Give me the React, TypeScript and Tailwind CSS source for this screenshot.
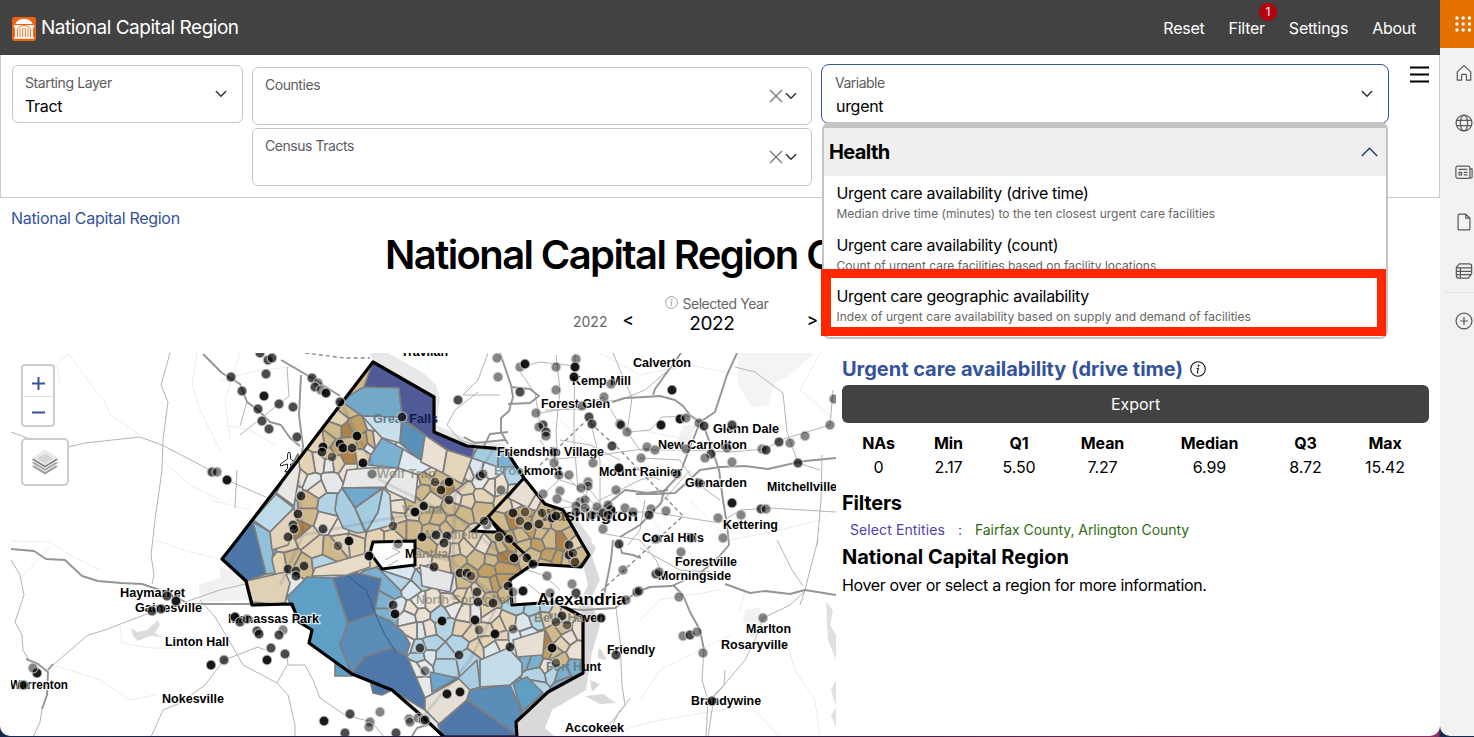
import React from 'react';

type Pt = [number, number];

const COUNTY: Pt[] = [
  [373, 362], [434, 397], [434, 432], [467, 446], [505, 449], [524, 478], [545, 504], [563, 510], [583, 545],
  [589, 555], [581, 567], [533, 564], [510, 580], [512, 605], [555, 602], [583, 617], [583, 673], [548, 692],
  [516, 722], [517, 737], [444, 737], [423, 717], [392, 690], [352, 674], [309, 643], [312, 630], [299, 622],
  [292, 604], [252, 605], [246, 581], [222, 559], [237, 540],
];

const CODES: Record<string, string> = {
  a: '#e3d2b4', b: '#cfb88a', c: '#bf9f63', d: '#ebe0d2', e: '#e7e9e9', f: '#dbe7ef', g: '#b3d4e5', h: '#7bb0d0', i: '#ae8149',
};

const SEEDS = `
350,412,b 340,418,a 322,430,b 334,432,b 345,428,i 356,428,c 364,420,a 371,440,b 362,444,c 352,448,b 344,440,c 338,447,c
326,443,b 318,440,a 314,450,a 330,455,b 320,460,d 347,457,i 357,458,b 366,458,a 338,462,a 328,466,e 315,472,e 305,463,a
300,478,d 292,490,e 281,480,e 328,481,e 319,490,d 308,500,b 300,508,d 312,485,e 326,503,g 290,503,g 293,520,a 301,526,i
280,535,a 287,548,a 296,546,d 308,535,a 306,518,b 322,520,d 334,525,a 318,548,a 330,545,b 340,538,a 350,548,b 358,540,a
342,530,d 355,536,a 310,556,b 300,565,b 290,560,b 322,562,g 335,557,f 280,560,a 270,552,h 296,586,e 303,583,f
375,421,f 375,440,d 370,448,e 380,425,e 373,470,e 360,475,e 392,478,e 404,468,e 350,470,d 385,470,e 410,480,e 418,472,b
410,458,f 430,468,d 437,476,b 444,482,b 450,490,i 438,488,c 458,485,b 452,475,a 465,470,d 466,490,a 475,466,f 485,470,e
480,480,e 492,475,e 500,485,d 505,478,f 490,488,d 480,495,a 468,502,a 495,498,a 505,500,a 480,508,b 465,515,b 510,470,g 517,478,g
425,480,b 421,490,b 412,492,d 400,493,d 400,505,d 410,505,b 420,503,b 415,517,a 400,517,a 430,500,a 440,505,a 450,505,b
458,500,d 436,515,b 450,518,b 425,515,b 405,530,b 393,537,a 380,533,b 375,540,a 385,520,a 413,528,b 422,530,c 433,528,b
445,530,b 458,526,b 468,527,b 455,537,a 436,538,a 425,543,b 465,540,b 475,540,a 484,542,d 492,550,b 480,550,b 468,550,a
455,548,a 445,550,a 430,555,a 440,562,a 422,560,d 425,572,d 440,578,e 450,585,e 460,565,b 468,572,c 478,570,b 488,572,c
498,565,c 505,558,i 512,552,b 500,545,b 490,560,b 480,562,b 508,570,i 502,580,c 494,585,c 484,583,b 475,585,c 463,585,b
490,597,b 505,592,b 500,600,a 480,597,a 470,595,a 460,595,a 514,572,d 506,540,c 498,535,b
500,520,b 508,508,b 515,500,d 520,492,d 528,500,d 505,528,c 513,520,i 520,512,c 525,520,c 533,512,b 540,520,b 548,512,b
556,516,b 550,528,c 540,532,b 530,533,c 520,535,b 515,543,a 527,545,b 537,542,c 547,540,b 557,530,b 565,525,b 570,535,b
562,542,i 552,550,f 545,555,c 535,555,b 557,558,c 568,552,b 578,555,b 577,545,a 567,562,b 528,560,i 572,562,i 543,562,b
422,580,g 412,580,f 405,570,f 400,582,g 395,595,h 385,585,g 388,600,h 396,608,f 384,614,h 405,598,f 412,590,f 420,600,e
410,610,d 400,618,f 412,620,e 422,613,d 430,605,d 440,595,e 448,600,d 455,608,e 440,612,g 430,618,f 420,630,f 430,632,d
445,625,g 455,618,d 465,615,d 460,628,a 470,635,a 450,638,a 475,610,e 485,612,a 492,618,d 480,622,a 488,630,a 498,628,a
505,620,a 510,612,e 490,642,a 475,645,a 500,638,a 485,650,e 495,650,f 470,655,g 460,645,g 450,650,g 440,655,g 432,645,g
420,645,g 410,650,g 418,658,g 425,667,e 430,655,f 440,668,g 415,670,e 415,685,e 445,662,g 466,668,h 405,640,e 410,630,d
518,608,g 525,612,g 535,608,g 545,610,g 520,622,f 530,625,g 540,620,g 515,635,f 525,635,f 535,628,f 548,620,a 556,612,a
563,618,a 572,615,d 578,628,d 565,630,b 555,632,b 550,640,b 560,642,a 570,640,d 578,650,d 565,652,b 552,655,b 548,650,c
560,662,b 572,662,h 562,672,h 550,672,g 540,678,g 530,668,f 535,660,h 525,660,h 545,665,d 552,685,g 537,688,g 565,680,h
512,655,f 498,658,f 505,645,d 545,640,i 575,670,h 547,600,a
`.trim().split(/\s+/).filter((_, i) => i % 4 !== 2).map((s, i) => {
  const [x, y, c] = s.split(',');
  return { x: Number(x) + ((i * 37) % 7) - 3, y: Number(y) + ((i * 53) % 7) - 3, c };
});

/* Cell of one seed: the map rectangle cut by the bisector against every near seed. */
function cellOf(i: number): Pt[] {
  const s = SEEDS[i];
  let poly: Pt[] = [[215, 355], [595, 355], [595, 740], [215, 740]];
  SEEDS.forEach((o, j) => {
    if (j === i) return;
    const mx = (s.x + o.x) / 2;
    const my = (s.y + o.y) / 2;
    const nx = o.x - s.x;
    const ny = o.y - s.y;
    const side = (p: Pt) => (p[0] - mx) * nx + (p[1] - my) * ny;
    const next: Pt[] = [];
    poly.forEach((p, k) => {
      const q = poly[(k + 1) % poly.length];
      const a = side(p);
      const b = side(q);
      if (a <= 0) next.push(p);
      if (a * b < 0) {
        const t = a / (a - b);
        next.push([p[0] + (q[0] - p[0]) * t, p[1] + (q[1] - p[1]) * t]);
      }
    });
    poly = next;
  });
  return poly;
}
const CELLS = SEEDS.map((s, i) => ({ c: CODES[s.c], pts: cellOf(i).map((p) => p.map((v) => v.toFixed(1)).join(',')).join(' ') }));

const TRACTS: [string, string][] = [
  ['#4f5a96', '373,362 434,397 434,432 467,446 474,448 472,458 447,450 425,435 402,418 398,389 364,387'],
  ['#72a9c9', '364,387 399,388 402,418 362,416 345,404 338,402'],
  ['#c9dfeb', '362,416 402,417 400,443 382,438'],
  ['#5991b9', '402,420 425,435 421,461 400,443'],
  ['#7bb1d0', '382,438 403,449 398,468 368,465 371,455'],
  ['#e0ebf1', '403,449 421,460 432,467 418,475 398,468'],
  ['#e8e9e7', '398,468 418,475 415,503 402,497 387,490 385,485'],
  ['#e9eae8', '347,470 368,468 398,468 385,487 342,488'],
  ['#e8e7e4', '298,454 300,470 294,506 276,493'],
  ['#bfdae8', '276,494 294,508 270,532 253,520'],
  ['#4d76a8', '253,520 266,574 246,581 222,559 237,540'],
  ['#90c0da', '253,522 270,532 274,545 272,560 275,573 266,574'],
  ['#e3d3b8', '294,508 297,522 288,545 272,550 270,532'],
  ['#5f9fc5', '307,577 333,578 348,623 340,645 352,674 352,676 335,676 335,661 309,643 312,630 299,622 287,597'],
  ['#4d76a8', '333,578 357,573 381,579 374,614 348,623'],
  ['#5a8db8', '348,623 374,614 390,621 403,632 410,644 406,656 392,648 364,657 352,674 340,645'],
  ['#4f77aa', '392,648 407,656 425,698 425,710 392,690 382,695 373,693 370,680 352,674 364,657'],
  ['#e6dfd5', '425,698 460,678 470,690 467,700 440,725 425,710'],
  ['#4f77aa', '467,700 517,735 517,740 444,740 438,725'],
  ['#5a8db8', '470,690 510,685 522,712 516,722 517,735 467,700'],
  ['#5f9fc5', '513,683 527,677 543,693 522,712'],
  ['#c5dcea', '480,687 480,660 508,648 522,663 522,675 510,685'],
  ['#a8cde0', '458,678 477,660 480,687 470,690'],
  ['#e0d0b5', '246,581 285,572 290,583 285,603 272,604 252,602'],
  ['#70a9cc', '342,488 383,488 355,508'],
  ['#a9cee1', '342,488 355,508 365,532 357,533 343,528 335,510 337,495'],
  ['#c0dcea', '383,488 390,495 392,525 366,532 378,512'],
  ['#a3cce0', '383,488 355,508 366,532 378,512'],
  ['#eae0d3', '425,435 447,450 443,473 421,462'],
  ['#e4d5bb', '447,450 472,458 462,484 443,473'],
  ['#a5cbdf', '477,448 498,450 498,467 472,458'],
  ['#7fb2d2', '498,450 506,449 517,467 498,467'],
  ['#e8dfd3', '524,478 536,494 528,508 508,498'],
  ['#6ba5ca', '430,672 458,678 432,692'],
  ['#e8dfd3', '513,640 545,630 543,655 517,657'],
  ['#e8dcc9', '312,576 315,568 370,552 370,567 347,575'],
  ['#e5e6e7', '420,565 454,574 450,592 422,586'],
];

const ROADS_MAJOR = [
  'M11,549 L34,551 L46,559 L65,560 L82,576 L98,581 L121,583 L142,584 L160,590 L190,604 L250,604',
  'M203,354 L216,367 L222,373 L240,384 L247,402 L258,410 L270,422 L281,425 L290,438 L300,446',
  'M301,375 L299,415 L303,446 L298,480 L294,510 L303,535 L290,545',
  'M281,360 L312,378 L340,396',
  'M500,353 L511,385 L513,397 L509,411 L501,418 L501,432 L508,444 M511,387 L530,389 L539,396 L530,403 L508,404',
  'M464,437 L475,443 L505,440 M508,432 L490,434 L484,446',
  'M612,402 L625,398 L645,397 L660,396 L675,400 L683,406 L690,415 L699,422 L706,432 L714,455 L719,470 L723,500 L727,525 L729,545',
  'M737,353 L727,375 L715,412 L706,418 L700,422 L693,440 L685,460 L680,474 L664,491 L661,503 L640,525 L620,537',
  'M681,353 L655,389 L653,395',
  'M636,494 L655,494 L675,493 L684,485 L700,470 L720,467 L745,466 L768,469 L790,464 L805,461 L836,458',
  'M668,490 L648,493 L625,490 L600,510',
  'M729,545 L716,560 L700,573 L672,586 L650,587 L637,592 L615,608 L583,610 L560,608',
  'M725,584 L750,593 L765,591 L790,594 L805,590 L836,595',
  'M673,585 L683,595 L690,612 L700,630 L704,650',
  'M613,540 L611,560 L606,585 L602,605',
  'M619,542 L622,553 L633,555 L641,558',
  'M26,659 L38,664 L48,672 L47,695 L42,709 M48,670 L53,664',
  'M412,736 L417,728 L430,724 L444,727',
];
const ROADS = [
  'M11,432 L30,439 L68,447 L85,443 L140,437 L162,445 L210,470',
  'M170,353 L161,385 L168,402 L163,440 L162,470 L155,520 L151,555 L154,575 L152,584',
  'M11,560 L20,575 L24,595 L15,622 L22,635 L23,650 L29,660',
  'M53,665 L88,635 L105,630 L131,620 L160,609',
  'M188,601 L220,590 L250,583',
  'M42,709 L40,722 L33,737 M151,737 L163,710 L180,703 L205,685 L224,660',
  'M227,480 L295,510 M237,470 L235,508',
  'M200,600 L215,617 L230,642 L243,665 L277,683 L288,695 L295,725 L295,737',
  'M224,660 L258,647 L265,650 M287,655 L288,665 L305,665 L313,680 L320,698 L345,715 L372,722 L384,737 M287,665 L277,683',
  'M287,367 L289,396 L240,435 M247,402 L240,426',
  'M488,353 L478,380 L463,395 L500,395 M478,392 L455,410 L447,425 L460,440 L475,445',
  'M520,367 L540,362 L575,366 M520,372 L535,393 L540,425 L543,440',
  'M556,355 L560,390 L556,430 L559,480 L545,493',
  'M575,353 L574,420 L574,440 L578,490 M540,413 L582,406 L604,397',
  'M545,410 L580,409 L612,400 M604,398 L617,420 L630,432 L650,430 L662,417 L690,416',
  'M613,353 L632,398 L627,432 L640,450 L690,450 L730,452 L766,449 L780,440 L830,425 L833,390',
  'M545,460 L600,455 L650,448 M620,400 L645,390 L666,372',
  'M600,500 L640,480 L680,470 M600,510 L560,470 L540,440',
  'M600,512 L600,460 L590,420 M600,512 L650,512 L720,523 L740,510 L770,508 L836,512',
  'M735,367 L755,372 L783,393 L787,432 L798,463 L820,470 M822,455 L821,500 L817,545 M818,540 L810,570 L805,590 L800,605',
  'M777,540 L792,570 L803,586 M804,592 L790,605 L763,618 L757,635 L745,660 L714,697 L708,737',
  'M704,650 L702,680 L708,700 L706,737 M712,697 L724,685 L725,670',
  'M615,600 L620,640 L622,685 L625,705 L605,730',
  'M600,533 L640,540 L656,560 L665,580 M640,548 L680,570 L710,572',
  'M560,480 L590,490 L610,515 M540,510 L570,507 L611,510 M588,482 L585,508 L560,499',
  'M690,470 L655,510 M640,458 L680,460 L695,482 L720,500',
  'M511,574 L528,570 L545,576 L560,590 M528,584 L545,598',
  'M620,710 L613,724 M630,698 L620,712',
  'M610,470 L640,470 L660,480 M560,440 L590,445 L620,460 M645,500 L640,530 L628,545',
];
const ROADS_FAINT = [
  'M68,353 L95,390 L104,400 L110,415 L125,425 L140,435 M68,353 L57,365 L60,385',
  'M11,541 L50,542 L70,555 L100,570 M50,547 L22,577',
  'M162,460 L190,485 L220,500 M197,353 L192,385 L200,410 L220,450',
  'M155,540 L190,552 L215,558 M240,353 L225,400 L230,440',
  'M53,665 L100,680 L130,700 L155,695 M120,625 L122,643 L150,648 L205,648',
  'M220,380 L260,370 L300,366 M225,425 L250,430 L275,445 M210,500 L250,510',
  'M640,700 L660,670 L690,655 L730,635 M600,737 L650,722 L720,710 L745,705',
  'M745,700 L780,737 M786,640 L795,670 L815,700 L820,737',
  'M600,353 L640,375 L690,365 L740,375 M640,430 L690,440',
  'M560,420 L620,470 L660,530 M640,620 L660,600 L720,590 M745,590 L740,610',
  'M690,500 L730,540 L780,530 L820,520 M820,353 L800,390 L836,420',
];
const DASHED = ['M305,353 L345,358 L370,358', 'M540,465 L587,420 L620,450 L683,516 L600,592'];

const TOWNS: [string, number, number, number, number][] = [
  ['Travilah', 401, 356, 13, 47], ['Calverton', 633, 367, 13, 58], ['Kemp Mill', 572, 385, 13, 59], ['Forest Glen', 541, 408, 13, 69],
  ['Great Falls', 373, 423, 13, 65], ['Glenn Dale', 713, 433, 13, 66], ['New Carrollton', 658, 449, 13, 89],
  ['Friendship Village', 497, 456, 13, 107], ['Brookmont', 494, 475, 13, 68], ['Mount Rainier', 599, 476, 13, 83],
  ['Wolf Trap', 377, 478, 13, 59], ['Glenarden', 685, 487, 13, 62], ['Mitchellville', 767, 491, 13, 70], ['Vienna', 402, 514, 13, 40],
  ['Washington', 540, 521, 17, 98], ['Kettering', 723, 529, 13, 55], ['Coral Hills', 642, 542, 13, 62], ['Merrifield', 425, 539, 13, 53],
  ['Mantua', 405, 558, 13, 43], ['Forestville', 675, 566, 13, 62], ['Morningside', 658, 580, 13, 73], ['Haymarket', 120, 597, 13, 65],
  ['Gainesville', 135, 612, 13, 67], ['North Springfield', 416, 604, 13, 101], ['Alexandria', 537, 605, 17, 89],
  ['Belle Haven', 534, 622, 13, 71], ['Manassas Park', 228, 623, 13, 91], ['Linton Hall', 165, 646, 13, 64], ['Marlton', 746, 633, 13, 45],
  ['Rosaryville', 721, 649, 13, 67], ['Friendly', 607, 654, 13, 48], ['Fort Hunt', 546, 671, 13, 55], ['Warrenton', 10, 689, 13, 58],
  ['Nokesville', 162, 703, 13, 62], ['Brandywine', 691, 705, 13, 70], ['Accokeek', 565, 732, 13, 59],
];
const INSIDE = ['Wolf Trap', 'Vienna', 'Merrifield', 'North Springfield'];
/* Names that cross the county border: dimmed part, border, plain part. */
const SPLIT: Record<string, [string, string, string, string]> = {
  'Great Falls': ['Great ', 'Falls', '#5b7c8e', '#121a4a'],
  Brookmont: ['Broo', 'kmont', '#7c98a6', '#000'],
  Mantua: ['M', 'antua', '#000', '#94886f'],
  'Belle Haven': ['Belle Ha', 'ven', '#85857a', '#000'],
  'Fort Hunt': ['Fort H', 'unt', '#66808c', '#000'],
  Washington: ['Wa', 'shington', '#6d5c3a', '#000'],
};

const DOTS = `
260,353,1 268,360,1 272,358,1 266,374,1 231,377,1 242,391,1 264,396,2 279,404,1 293,407,1 258,409,1 262,421,1 269,429,1 312,378,1
318,383,0 315,387,1 321,390,0 326,393,2 340,402,1 297,437,1 357,436,2 323,447,2 322,452,1 340,444,2 343,448,2 352,448,1 332,457,0
363,463,2 372,474,0 402,417,1 301,496,1 298,514,1 293,525,1 294,529,1 288,537,1 323,529,1 349,541,2 338,546,0 393,526,0 415,512,2
423,506,1 422,537,2 398,544,0 212,472,1 217,472,0 227,480,2 497,358,0 498,377,0 520,367,0 525,364,2 520,392,1 458,400,1
536,413,0 543,425,1 539,427,0 546,432,1 546,436,0 556,367,0 556,390,0 576,359,0 575,367,2 574,377,2 611,384,0 604,397,0 582,406,0
589,417,1 592,424,1 554,452,0 554,463,0 559,475,0 569,475,0 593,463,0 612,446,1 449,482,2 435,482,0 441,490,1 449,500,1 480,476,1
483,474,0 501,490,0 415,512,1 424,506,0 513,513,1 525,512,0 520,521,0 528,526,1 539,524,1 542,513,0 552,518,1 556,516,1
543,494,0 560,491,0 557,499,0 588,482,0 588,486,0 581,488,0 580,502,0 585,500,0 576,506,0 585,508,0 597,507,0 611,510,2 616,490,0
603,529,0 487,525,0 484,521,0 436,535,1 447,536,1 444,543,1 499,537,1 509,539,1 569,545,1 672,390,2 680,419,2 686,418,0 661,425,2
620,424,1 621,425,0 627,432,0 699,423,0 704,426,1 732,425,1 647,447,0 655,450,0 641,458,0 619,468,2 686,449,0 711,454,1 705,458,0
727,448,0 732,462,0 677,474,0 699,483,0 762,449,0 766,450,1 779,442,1 790,443,0 805,436,0 830,425,0 834,399,0 798,463,1
732,503,2 741,515,0 761,509,1 766,509,0 718,518,0 723,538,0 625,508,0 651,509,0 649,515,1 666,511,0 603,513,1 608,515,0 656,539,0 691,538,0
619,544,1 167,596,1 176,601,2 152,611,1 161,609,1 211,665,2 37,673,2 33,668,0 22,685,1 24,685,0 235,617,2 240,622,1 247,619,0
257,631,1 259,634,1 283,630,0 279,635,1 271,648,1 285,654,1 267,660,2 224,660,1 324,721,2 350,714,1 380,712,0 370,722,0 369,727,0
345,733,1 396,733,1 409,719,0 410,722,0 418,718,0 423,720,0 425,720,1 288,569,1 296,571,1 296,576,1 304,566,1 393,605,1
395,614,2 420,648,1 425,671,0 369,556,2 434,567,1 460,573,1 467,573,1 471,576,0 477,592,1 478,602,1 493,603,1
508,586,1 513,592,0 523,591,2 514,558,2 527,558,1 533,564,1 569,555,1 573,553,0 575,562,0 547,576,0 572,584,0 576,593,1 550,593,0
442,621,2 475,620,2 479,630,0 495,634,2 513,629,0 510,647,1 562,616,1 556,622,0 567,625,0 552,648,2 556,663,0 601,618,1 616,655,1
459,655,1 447,694,2 460,692,2 681,552,0 623,570,0 656,574,1 659,572,0 626,600,0 637,592,1 639,591,0 679,597,0 683,636,0
690,635,1 697,632,0 703,653,0 763,618,0 712,701,1 608,505,0 592,515,0 633,512,0 576,512,0
`.trim().split(/\s+/).map((s) => s.split(',').map(Number));
const DOT_OPACITY = [0.48, 0.7, 0.9];

const outline = COUNTY.map((p) => p.join(',')).join(' ');

function RegionMap() {
  return (
    <svg className="block" width="825" height="384" viewBox="11 353 825 384">
      <defs>
        <clipPath id="county"><polygon points={outline} /></clipPath>
      </defs>
      <g fill="#ededed">
        <path d="M738,353 L814,353 L790,375 L775,383 L768,405 L752,408 L738,385 Z" fill="#f4f4f4" />
        <path d="M199,585 L220,578 L220,567 L245,575 L250,600 L199,602 Z" fill="#f1f1f1" />
        <path d="M683,425 L697,425 L685,450 L677,445 Z M745,610 L760,608 L763,625 L752,638 L743,622 Z" fill="#f2f2f2" />
        <path d="M583,545 L590,540 L596,548 L592,556 L600,580 L590,600 L600,625 L592,652 L586,690 L552,710 L545,728 L555,737 L516,737 L516,722 L548,692 L583,673 L583,617 L578,605 L588,585 L583,565 Z" fill="#d9d9d9" />
        <path d="M563,510 L572,512 L592,540 L586,548 Z" fill="#dedede" />
        <path d="M598,650 L600,648 L607,660 L598,658 Z M585,696 L603,694 L616,703 L600,704 Z M590,680 L600,684 L592,692 Z" fill="#d9d9d9" />
        <path d="M826,602 L833,610 L830,625 L836,635 L836,660 L828,640 Z M836,680 L831,690 L834,700 L836,705 Z M836,708 L831,715 L836,727 Z" fill="#e0e0e0" />
        <path d="M131,628 L137,632 L147,630 L158,620 L160,625 L155,633 L162,637 L150,636 L138,641 L133,636 Z" fill="#dcdcdc" />
        <path d="M370,353 L388,353 L422,372 L436,385 L440,400 L436,425 L470,440 L505,444 L505,449 L467,447 L434,432 L434,397 L373,362 Z" fill="#e8e8e8" />
      </g>
      <g fill="none" stroke="#ececec" strokeWidth="1">{ROADS_FAINT.map((d) => <path key={d} d={d} />)}</g>
      <g fill="none" stroke="#b4b4b4" strokeWidth="1">{ROADS.map((d) => <path key={d} d={d} />)}</g>
      <g fill="none" stroke="#959595" strokeWidth="1.9" strokeLinejoin="round">{ROADS_MAJOR.map((d) => <path key={d} d={d} />)}</g>
      <g fill="none" stroke="#8d8d8d" strokeWidth="1.4" strokeDasharray="4 3">{DASHED.map((d) => <path key={d} d={d} />)}</g>
      <path d="M289,452 q-1.500,0 -1.500,4 v3 l-7,5 v2 l7,-2 v4.500 l-2.500,2.500 v1 l4,-1 l4,1 v-1 l-2.500,-2.500 v-4.500 l7,2 v-2 l-7,-5 v-3 q0,-4 -1.500,-4 Z" fill="#fff" stroke="#222" strokeWidth="1" />

      <g clipPath="url(#county)" stroke="#7d7d7d" strokeWidth="1.7" strokeLinejoin="round">
        {CELLS.map((c, i) => <polygon key={i} points={c.pts} fill={c.c} />)}
      </g>
      <g stroke="#7d7d7d" strokeWidth="1.7" strokeLinejoin="round">
        {TRACTS.map(([fill, pts]) => <polygon key={pts} points={pts} fill={fill} />)}
      </g>
      <g clipPath="url(#county)" fill="none" stroke="#40506e" strokeOpacity=".14" strokeWidth="3">
        <path d="M299,480 L303,535 L280,585 M303,535 L380,520 L440,510 L480,470 L500,440 M395,550 L450,560 L500,600 L470,660 L420,720 M340,400 L380,480 L460,520 L520,570 M455,490 L452,600" />
      </g>
      <path d="M348,576 L358,584 L366,590 L371,602 L378,620 L385,635 L396,652" fill="none" stroke="#33568f" strokeOpacity=".7" strokeWidth="1.3" />
      <polygon points="473,531 488,517 500,532 493,532" fill="#fff" stroke="#000" strokeWidth="3" />
      <polygon points="373,542 415,541 415,565 382,569 370,553" fill="#fff" stroke="#000" strokeWidth="3" />
      <path d="M385,560 L400,552 L392,548 M388,566 L398,560" stroke="#aaa" fill="none" />
      <polyline points="524,478 488,517 515,545 527,556 533,564" fill="none" stroke="#000" strokeWidth="3" />
      <polygon points={outline} fill="none" stroke="#000" strokeWidth="3.2" strokeLinejoin="round" />

      <g fontFamily="'Liberation Sans', sans-serif" fontWeight="700">
        {TOWNS.map(([name, x, y, size, width]) => {
          const inside = INSIDE.includes(name);
          const split = SPLIT[name];
          return (
            <text key={name} x={x} y={y} fontSize={size} textLength={width} lengthAdjust="spacingAndGlyphs"
              stroke="#fff" strokeOpacity={inside || split ? 0 : 0.75} strokeWidth="2.5" paintOrder="stroke"
              fill={inside ? '#75705f' : '#000'} fillOpacity={inside ? 0.6 : 1}>
              {split ? (
                <>
                  <tspan fill={split[2]}>{split[0]}</tspan>
                  <tspan fill={split[3]}>{split[1]}</tspan>
                </>
              ) : name}
            </text>
          );
        })}
      </g>
      {DOTS.map(([x, y, o], i) => (
        <circle key={i} cx={x} cy={y} r="4.9" fill="#000" fillOpacity={DOT_OPACITY[o]} stroke="#e0e0e0" strokeOpacity=".65" strokeWidth="1.3" />
      ))}
    </svg>
  );
}

const Chevron = ({ className }: { className: string }) => (
  <svg className={className} viewBox="0 0 12 8" fill="none" stroke="#333" strokeWidth="1.5" strokeLinecap="round" strokeLinejoin="round"><path d="M1.3 1.5 6 6.2l4.7-4.7" /></svg>
);

function MultiSelect({ label }: { label: string }) {
  return (
    <div className="flex h-[58px] w-[560px] justify-between rounded-md border border-[#c6c6c6] pl-3 pr-[14px]">
      <span className="mt-[8px] text-[14px] leading-[18px] tracking-[-0.45px] text-[#5c5c5c]">{label}</span>
      <span className="flex items-center gap-[2px] pb-px">
        <svg className="size-[14px]" viewBox="0 0 14 14" stroke="#777" strokeWidth="1.4"><path d="M1 1l12 12M13 1 1 13" /></svg>
        <Chevron className="h-2 w-3" />
      </span>
    </div>
  );
}

const STATS = [
  ['NAs', '0', 'w-[73px]'], ['Min', '2.17', 'w-[67px]'], ['Q1', '5.50', 'w-[74px]'], ['Mean', '7.27', 'w-[93px]'],
  ['Median', '6.99', 'w-[121px]'], ['Q3', '8.72', 'w-[71px]'], ['Max', '15.42', 'w-[88px]'],
];

const OPTIONS = [
  ['Urgent care availability (drive time)', 'Median drive time (minutes) to the ten closest urgent care facilities'],
  ['Urgent care availability (count)', 'Count of urgent care facilities based on facility locations'],
  ['Urgent care geographic availability', 'Index of urgent care availability based on supply and demand of facilities'],
];

const InfoIcon = ({ className, color }: { className: string; color: string }) => (
  <svg className={className} viewBox="0 0 16 16" fill="none" stroke={color}><circle cx="8" cy="8" r="7.3" strokeWidth="1.1" /><path d="M6.6 7.2h1.7l-.9 4.3q-.1.8 1 .4" strokeWidth="1.1" /><circle cx="8.6" cy="4.6" r=".6" fill={color} /></svg>
);

function Sidebar() {
  const icons = [
    <path key="h" d="M2.5 8.8 10 1.8l7.500 7V18h-4.800v-5.500q0-1-1-1H8.300q-1 0-1 1V18H2.500Z" />,
    <g key="g"><circle cx="10" cy="10" r="8.8" /><ellipse cx="10" cy="10" rx="4" ry="8.8" /><path d="M2 7h16M2 13h16" /></g>,
    <g key="n"><path d="M16.500 15.500a1.600 1.600 0 0 1-1.600 1.500H2.900a1.900 1.900 0 0 1-1.900-1.700V5.200a1.700 1.700 0 0 1 1.700-1.700h12.100a1.700 1.700 0 0 1 1.700 1.700v10.300a1.200 1.200 0 0 0 2.500 0V6.500H16.500" /><path d="M4 7.200h9.700M9.800 10.500h4M9.800 13.200h4M4.500 10.500h2.900v2.800H4.500Z" /></g>,
    <path key="f" d="M12 1.200H4.900a1.500 1.500 0 0 0-1.500 1.500v14.600a1.500 1.500 0 0 0 1.500 1.500h10.200a1.500 1.500 0 0 0 1.500-1.500V5.800Zm0 0v4.600h4.600" />,
    <g key="l"><path d="M5 2h11q2.500 0 2.500 2.500V13l-3.500 5H4.500Q1.500 18 1.500 15V6Z M1.500 6.500h17M1.500 10.300h17M1.500 14h17M6 6.500V18" /></g>,
    <g key="p"><circle cx="10" cy="10" r="8.800" /><path d="M10 5.600v8.800M5.600 10h8.800" /></g>,
  ];
  return (
    <aside className="relative flex h-[736px] w-[34px] shrink-0 flex-col overflow-hidden rounded-bl-[10px] bg-[#f3f2f1]">
      <div className="flex h-12 items-center bg-[#e57200] pl-[15px]">
        <svg className="h-4 w-[18px]" viewBox="0 0 18 16" fill="#fff">
          {[2, 8.2, 14.4].flatMap((x) => [2, 8, 14].map((y) => <circle key={`${x}-${y}`} cx={x} cy={y} r="1.7" />))}
        </svg>
      </div>
      <div className="flex flex-col gap-[31.500px] pl-[14.500px] pt-[16px]">
        {icons.map((icon, i) => (
          <svg key={i} className="size-[18px] shrink-0" viewBox="0 0 20 20" fill="none" stroke="#5a5957" strokeWidth="1.35" strokeLinejoin="round">{icon}</svg>
        ))}
      </div>
      <div className="absolute left-1 top-[292px] h-px w-[30px] bg-[#e4e3e2]" />
    </aside>
  );
}

export default function App() {
  return (
    <div className="flex h-[737px] w-[1474px] items-start overflow-hidden bg-[linear-gradient(90deg,#15294f_0,#241a3d_400px,#301d42_800px,#8b2f5e_1438px,#14294d_1441px)] font-['Inter',sans-serif] text-black">
      <main className="h-[736px] w-[1440px] overflow-hidden rounded-b-[10px] bg-white">
        <header className="flex h-[55px] items-center bg-[#424242] pl-3 pr-[24px] text-white">
          <svg className="mt-[3px] size-6" viewBox="0 0 24 24">
            <rect width="24" height="24" rx="2.500" fill="#f26110" />
            <path d="M3.500 7Q5 2 12 2t8.500 5Z" fill="#fff" />
            <path d="M1.800 8h20.400v2.500H21V20h1v1.800H2V20h1v-9.500H1.800Z" fill="#fff" />
            <path d="M4 7.500h16M5.500 20v-8Q7 8.500 12 8.500t6.500 3.500v8M8 20v-8.500M10.700 20v-9M13.300 20v-9M16 20v-8.500" fill="none" stroke="#f26110" strokeWidth=".9" />
          </svg>
          <span className="ml-[5px] text-[19px] leading-7 tracking-[-0.48px]">National Capital Region</span>
          <nav className="ml-auto flex gap-6 text-[16px] leading-6 tracking-[-0.25px]">
            <span>Reset</span>
            <span className="relative">
              Filter
              <span className="absolute -right-[12px] -top-[13px] flex h-[18px] w-[18px] items-center justify-center rounded-full bg-[#b8000f] text-[12px] tracking-normal">1</span>
            </span>
            <span>Settings</span>
            <span>About</span>
          </nav>
        </header>

        <section className="flex h-[143px] items-start border border-t-0 border-[#c9c9c9] pl-[11px] pt-[9px]">
          <div className="mt-[1px] flex h-[58px] w-[231px] items-center justify-between rounded-md border border-[#c6c6c6] pl-3 pr-[15px]">
            <div>
              <div className="pt-[3px] text-[14px] leading-[18px] tracking-[-0.4px] text-[#5c5c5c]">Starting Layer</div>
              <div className="mt-[2px] text-[16px] leading-6 tracking-[-0.3px]">Tract</div>
            </div>
            <Chevron className="h-2 w-3" />
          </div>
          <div className="ml-[9px] mt-[3px] flex flex-col gap-[3px]">
            <MultiSelect label="Counties" />
            <MultiSelect label="Census Tracts" />
          </div>
          <div className="relative ml-[9px] h-[60px] w-[568px] rounded-lg border-[1.500px] border-[#3656a0]">
            <div className="flex h-full items-center justify-between pl-[13px] pr-[15px]">
              <div>
                <div className="pt-[3px] text-[14px] leading-[18px] tracking-[-0.5px] text-[#5c5c5c]">Variable</div>
                <div className="mt-[2px] pl-px text-[16px] leading-6 tracking-[-0.3px]">urgent</div>
              </div>
              <Chevron className="h-2 w-3" />
            </div>
            <div className="absolute left-0 top-[57px] z-10 h-[217px] w-[566px] rounded-lg border-2 border-t-[6px] border-[#c4c4c4] bg-white">
              <div className="flex h-[48px] items-center justify-between bg-[#efefef] pl-[5px] pr-[8px]">
                <span className="text-[20px] font-bold leading-6 tracking-[-0.6px]">Health</span>
                <svg className="h-[10px] w-[17px]" viewBox="0 0 17 10" fill="none" stroke="#1d3f77" strokeWidth="1.500"><path d="M.8 9 8.500 1.200 16.200 9" /></svg>
              </div>
              {OPTIONS.map(([name, note]) => (
                <div key={name} className="h-[51.500px] pl-[12.500px] pt-[5px]">
                  <div className="text-[16px] leading-6 tracking-[-0.320px]">{name}</div>
                  <div className="text-[12px] leading-[17px] tracking-[0.010px] text-[#666]">{note}</div>
                </div>
              ))}
              <div className="absolute -left-[3px] top-[141px] h-[67px] w-[565px] border-[9px] border-l-[10px] border-[#ff2600]" />
            </div>
          </div>
          <svg className="ml-[21px] mt-[2px] h-[17px] w-[19px]" viewBox="0 0 19 17" stroke="#000" strokeWidth="1.800"><path d="M0 1.500h19M0 8.500h19M0 15.500h19" /></svg>
        </section>

        <div className="h-[32px] pl-[11px] pt-[8px] text-[16px] leading-6 tracking-[-0.300px] text-[#34539b]">National Capital Region</div>
        <h1 className="h-[50px] pl-[385px] pt-[1px] text-[40px] font-semibold leading-[48px] tracking-[-1.600px]">National Capital Region C</h1>
        <div className="flex h-[73px] items-start pl-[573px] pt-[12px]">
          <span className="mt-[18px] text-[14px] leading-6 text-[#666]">2022</span>
          <span className="ml-[15px] mt-[16px] text-[17px] font-medium leading-6">&lt;</span>
          <div className="ml-[32px] mt-px flex w-[102px] flex-col items-center">
            <span className="flex items-center gap-1 whitespace-nowrap text-[14px] leading-[22px] tracking-[-0.450px] text-[#666]"><InfoIcon className="mb-[3px] size-[13px]" color="#999" />Selected Year</span>
            <span className="-mt-[3px] pr-[10px] text-[19px] leading-6 tracking-[-0.400px]">2022</span>
          </div>
          <span className="ml-[39px] mt-[16px] text-[17px] font-medium leading-6">&gt;</span>
        </div>

        <div className="flex items-start pl-[11px]">
          <div className="relative w-[825px] shrink-0">
            <RegionMap />
            <div className="absolute left-[10px] top-[11px] flex h-[63px] w-[34px] flex-col rounded border-2 border-[#ccc] bg-white">
              <span className="flex flex-1 items-center justify-center border-b border-[#e2e2e2] pt-[5px]"><svg className="size-[13px]" viewBox="0 0 13 13" stroke="#34539b" strokeWidth="2"><path d="M0 6.500h13M6.500 0v13" /></svg></span>
              <span className="flex flex-1 items-center justify-center pt-[4px]"><svg className="size-[13px]" viewBox="0 0 13 13" stroke="#34539b" strokeWidth="2"><path d="M0 6.500h13" /></svg></span>
            </div>
            <div className="absolute left-[10px] top-[85px] flex h-[48px] w-[48px] items-center justify-center rounded-[5px] border-2 border-[#ccc] bg-white">
              <svg className="size-[26px]" viewBox="0 0 26 26">
                <path d="M0 17.500 13 25.500l13-8-13-8Z" fill="#a0a0a0" />
                <path d="M0 15 13 23l13-8-13-8Z" fill="#fff" /><path d="M0 14 13 22l13-8-13-8Z" fill="#a8a8a8" />
                <path d="M0 11.500 13 19.500l13-8-13-8Z" fill="#fff" /><path d="M0 10.500 13 18.500l13-8-13-8Z" fill="#777" />
                <path d="M0 8.800 13 16.800l13-8L13 .8Z" fill="#e9e9e9" /><path d="M5 9.500 13 4.800l8 4.700-8 5Z" fill="#d6d6d6" />
              </svg>
            </div>
          </div>

          <section className="ml-[6px] w-[587px] pt-[4px]">
            <h2 className="flex items-center gap-[7px] whitespace-nowrap text-[20px] font-bold leading-6 tracking-[-0.030px] text-[#34539b]">Urgent care availability (drive time)<InfoIcon className="size-4" color="#111" /></h2>
            <div className="mt-[4px] flex h-[38px] items-center justify-center rounded-md bg-[#424242] text-[16px] text-white">Export</div>
            <div className="mt-[8px] flex text-center text-[16px] leading-6 tracking-[-0.100px]">
              {STATS.map(([name, value, width]) => (
                <div key={name} className={width}><div className="font-bold">{name}</div><div>{value}</div></div>
              ))}
            </div>
            <h3 className="mt-[12px] text-[20px] font-bold leading-6 tracking-[-0.200px]">Filters</h3>
            <div className="mt-[4px] flex pl-2 text-[14px] leading-[22px]">
              <span className="tracking-[0.100px] text-[#5340b0]">Select Entities</span>
              <span className="ml-[13px] text-[#5340b0]">:</span>
              <span className="ml-[13px] tracking-[-0.060px] text-[#2f6b12]">Fairfax County, Arlington County</span>
            </div>
            <h3 className="mt-[4px] text-[20px] font-bold leading-6 tracking-[-0.020px]">National Capital Region</h3>
            <p className="mt-[4px] text-[16px] leading-6 tracking-[-0.350px]">Hover over or select a region for more information.</p>
          </section>
        </div>
      </main>
      <Sidebar />
    </div>
  );
}
